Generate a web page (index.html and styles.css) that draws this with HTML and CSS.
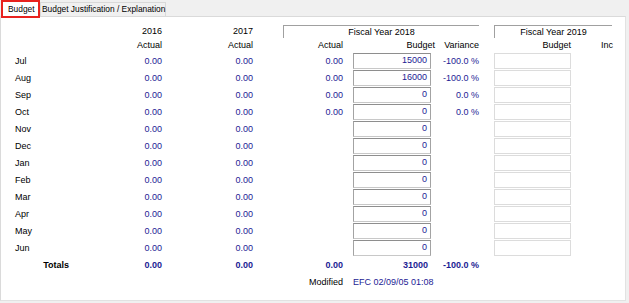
FILE: index.html
```html
<!DOCTYPE html>
<html>
<head>
<meta charset="utf-8">
<link rel="stylesheet" href="styles.css">
</head>
<body>
<div class="tabs">
  <div class="tab tab-active">Budget</div>
  <div class="tab tab-2">Budget Justification / Explanation</div>
</div>
<div class="panel">
  <div class="grid">
    <div class="hy c2">2016</div>
    <div class="hy c3">2017</div>
    <div class="group g18">Fiscal Year 2018</div>
    <div class="group g19">Fiscal Year 2019</div>

    <div class="hl c2">Actual</div>
    <div class="hl c3">Actual</div>
    <div class="hl c5">Actual</div>
    <div class="hl c7">Budget</div>
    <div class="hl c8">Variance</div>
    <div class="hl c10">Budget</div>
    <div class="hl c11">Inc</div>

    <div class="m first">Jul</div><div class="v c2">0.00</div><div class="v c3">0.00</div><div class="v c5">0.00</div><div class="box c7">15000</div><div class="v c8">-100.0 %</div><div class="box2 c10"></div>
    <div class="m">Aug</div><div class="v c2">0.00</div><div class="v c3">0.00</div><div class="v c5">0.00</div><div class="box c7">16000</div><div class="v c8">-100.0 %</div><div class="box2 c10"></div>
    <div class="m">Sep</div><div class="v c2">0.00</div><div class="v c3">0.00</div><div class="v c5">0.00</div><div class="box c7">0</div><div class="v c8">0.0 %</div><div class="box2 c10"></div>
    <div class="m">Oct</div><div class="v c2">0.00</div><div class="v c3">0.00</div><div class="v c5">0.00</div><div class="box c7">0</div><div class="v c8">0.0 %</div><div class="box2 c10"></div>
    <div class="m">Nov</div><div class="v c2">0.00</div><div class="v c3">0.00</div><div class="box c7">0</div><div class="box2 c10"></div>
    <div class="m">Dec</div><div class="v c2">0.00</div><div class="v c3">0.00</div><div class="box c7">0</div><div class="box2 c10"></div>
    <div class="m">Jan</div><div class="v c2">0.00</div><div class="v c3">0.00</div><div class="box c7">0</div><div class="box2 c10"></div>
    <div class="m">Feb</div><div class="v c2">0.00</div><div class="v c3">0.00</div><div class="box c7">0</div><div class="box2 c10"></div>
    <div class="m">Mar</div><div class="v c2">0.00</div><div class="v c3">0.00</div><div class="box c7">0</div><div class="box2 c10"></div>
    <div class="m">Apr</div><div class="v c2">0.00</div><div class="v c3">0.00</div><div class="box c7">0</div><div class="box2 c10"></div>
    <div class="m">May</div><div class="v c2">0.00</div><div class="v c3">0.00</div><div class="box c7">0</div><div class="box2 c10"></div>
    <div class="m">Jun</div><div class="v c2">0.00</div><div class="v c3">0.00</div><div class="box c7">0</div><div class="box2 c10"></div>

    <div class="tot-label">Totals</div><div class="t c2">0.00</div><div class="t c3">0.00</div><div class="t c5">0.00</div><div class="t c7 tb">31000</div><div class="t c8">-100.0 %</div>

    <div class="mod-label">Modified</div><div class="mod-val">EFC 02/09/05 01:08</div>
  </div>
</div>
</body>
</html>
```

FILE: styles.css
```css
html, body {
  margin: 0;
  padding: 0;
}
body {
  width: 629px;
  height: 303px;
  overflow: hidden;
  background: #f0f0f0;
  font-family: "Liberation Sans", Arial, sans-serif;
  font-size: 9px;
  color: #000;
}
.tabs {
  display: flex;
  align-items: flex-end;
  height: 16px;
  position: relative;
  z-index: 2;
  font-size: 8.4px;
}
.tab {
  box-sizing: border-box;
  height: 14px;
  line-height: 12px;
  padding: 0 2px;
  border: 1px solid #d9d9d9;
  border-bottom: none;
  background: #f0f0f0;
  white-space: nowrap;
}
.tab-2 {
  width: 126px;
  padding-left: 1px;
}
.tab-active {
  height: 18px;
  margin-left: 1px;
  margin-bottom: -1px;
  width: 39px;
  padding: 0 0 0 5px;
  line-height: 14px;
  background: #fff;
  border: 2px solid #e8221e;
  align-self: flex-start;
}
.panel {
  box-sizing: border-box;
  width: 626px;
  height: 285px;
  background: #fff;
  border: 1px solid #dadada;
  border-right: 1px solid #e2e2e2;
  border-bottom: 1px solid #e2e2e2;
}
.grid {
  display: grid;
  padding: 8px 0 0 14px;
  grid-template-columns: 91px 56px 91px 30px 60px 10px 78px 48px 15px 77px 42px;
  grid-template-rows: 13px 15px repeat(12, 17px) 17px 17px;
  line-height: 11px;
}
.c2 { grid-column: 2; }
.c3 { grid-column: 3; }
.c5 { grid-column: 5; }
.c7 { grid-column: 7; }
.c8 { grid-column: 8; }
.c10 { grid-column: 10; }
.c11 { grid-column: 11; }
.hy {
  grid-row: 1;
  text-align: right;
  padding-top: 1px;
}
.hl {
  grid-row: 2;
  text-align: right;
  padding-top: 2px;
  white-space: nowrap;
}
.hl.c7 { margin-right: -4px; }
.group {
  grid-row: 1;
  text-align: center;
  border-top: 1px solid #a0a0a0;
  border-left: 1px solid #a0a0a0;
  box-shadow: inset 1px 1px 0 #fff;
  padding-top: 1px;
  box-sizing: border-box;
  height: 13px;
}
.g18 { grid-column: 5 / 9; }
.g19 { grid-column: 10 / 12; margin-right: 1px; }
.m {
  grid-column: 1;
  padding-top: 3px;
}
.m.first { grid-row: 3; }
.v {
  text-align: right;
  color: #1c1c94;
  padding-top: 3px;
  white-space: nowrap;
}
.box {
  box-sizing: border-box;
  height: 16px;
  border: 1px solid #a3a3a3;
  border-top-color: #8e8e8e;
  border-bottom-color: #c8c8c8;
  text-align: right;
  padding: 1px 3px 0 0;
  color: #1c1c94;
}
.box2 {
  box-sizing: border-box;
  height: 16px;
  border: 1px solid #dcdcdc;
}
.tot-label {
  grid-column: 1;
  font-weight: bold;
  text-align: right;
  padding-right: 37px;
  padding-top: 3px;
}
.t {
  font-weight: bold;
  text-align: right;
  color: #1c1c94;
  padding-top: 3px;
  white-space: nowrap;
}
.tb { padding-right: 3px; }
.mod-label {
  grid-column: 4 / 6;
  text-align: right;
  padding-top: 3px;
}
.mod-val {
  grid-column: 7 / 10;
  color: #1c1c94;
  padding-top: 3px;
  white-space: nowrap;
}
```
